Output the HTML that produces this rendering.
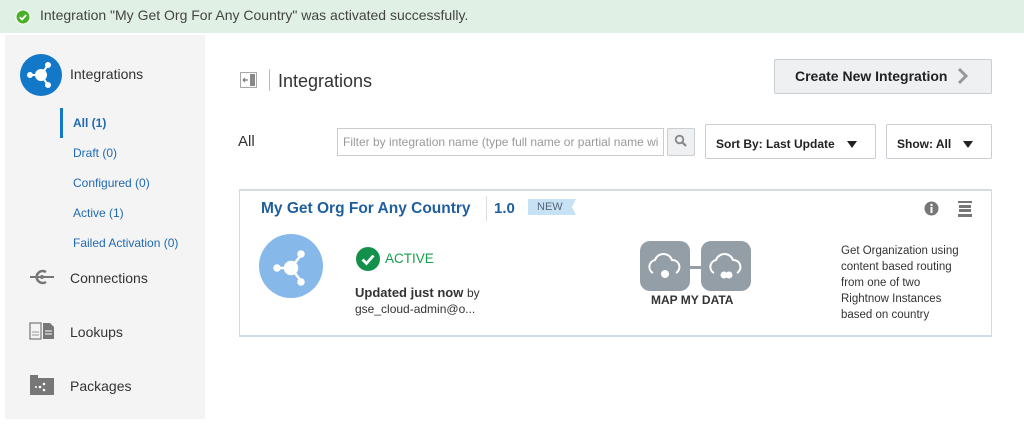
<!DOCTYPE html>
<html><head><style>
body{margin:0;width:1024px;height:429px;background:#fff;font-family:"Liberation Sans",sans-serif;position:relative;overflow:hidden;color:#333}
.a{position:absolute}
.banner{left:0;top:0;width:1024px;height:33px;background:#e1f0e4;}
.side{left:5px;top:35px;width:200px;height:384px;background:#f4f4f4}
.sub{font-size:12px;color:#1f6ab3;left:73px}
.nav{font-size:14px;color:#333;left:70px}
.btn{border:1px solid #c9ced3;background:#eef0f2;border-radius:2px;box-sizing:border-box}
.sel{border:1px solid #c9ced3;background:#fff;box-sizing:border-box;font-size:12px;font-weight:bold;color:#222;border-radius:2px}
.tri{position:absolute;width:0;height:0;border-left:5px solid transparent;border-right:5px solid transparent;border-top:7px solid #222}
</style></head><body>
<div class="a banner"></div>
<svg class="a" style="left:15px;top:9px" width="16" height="16"><circle cx="8" cy="8" r="7.5" fill="#fff"/><circle cx="8" cy="8" r="6.5" fill="#4caf2a"/><path d="M4.8 8.3l2.2 2.2 4.2-4.5" stroke="#fff" stroke-width="1.8" fill="none"/></svg>
<div class="a" style="left:40px;top:7px;font-size:14px;color:#444">Integration "My Get Org For Any Country" was activated successfully.</div>
<div class="a side"></div>
<svg class="a" style="left:20px;top:54px" width="42" height="42"><circle cx="21" cy="21" r="21" fill="#1478c9"/><g stroke="#fff" stroke-width="2" fill="#fff"><line x1="21" y1="21" x2="28" y2="11"/><line x1="21" y1="21" x2="11" y2="21"/><line x1="21" y1="21" x2="28" y2="31"/><circle cx="28" cy="11" r="2"/><circle cx="10" cy="21" r="2"/><circle cx="28" cy="31" r="2"/><circle cx="21" cy="21" r="5"/></g></svg>
<div class="a nav" style="top:66px">Integrations</div>
<div class="a" style="left:60px;top:108px;width:3px;height:30px;background:#1478c9"></div>
<div class="a sub" style="top:116px;font-weight:bold">All (1)</div>
<div class="a sub" style="top:146px">Draft (0)</div>
<div class="a sub" style="top:176px">Configured (0)</div>
<div class="a sub" style="top:206px">Active (1)</div>
<div class="a sub" style="top:236px">Failed Activation (0)</div>
<svg class="a" style="left:29px;top:269px" width="26" height="16"><line x1="1" y1="8" x2="25" y2="8" stroke="#777" stroke-width="2"/><path d="M17 3a6 6 0 1 0 0 10" stroke="#777" stroke-width="2.5" fill="none"/><circle cx="13" cy="8" r="2" fill="#777"/></svg>
<div class="a nav" style="top:270px">Connections</div>
<svg class="a" style="left:29px;top:322px" width="26" height="18"><rect x="1" y="1" width="11" height="16" fill="#f4f4f4" stroke="#777" stroke-width="1.2"/><path d="M14 1h7l4 4v12h-11z" fill="#777"/><g stroke="#fff" stroke-width="1"><line x1="16" y1="9" x2="23" y2="9"/><line x1="16" y1="12" x2="23" y2="12"/></g><g stroke="#999"><line x1="3" y1="10" x2="10" y2="10"/><line x1="3" y1="13" x2="10" y2="13"/></g></svg>
<div class="a nav" style="top:324px">Lookups</div>
<svg class="a" style="left:29px;top:374px" width="26" height="21"><path d="M1 1h8v3h16v17h-24z" fill="#777"/><g fill="#fff"><circle cx="11" cy="13" r="1.3"/><circle cx="15" cy="10" r="1.3"/><circle cx="15" cy="16" r="1.3"/><circle cx="7" cy="13" r="1"/></g></svg>
<div class="a nav" style="top:378px">Packages</div>

<svg class="a" style="left:240px;top:72px" width="17" height="16"><rect x="0.5" y="0.5" width="16" height="15" fill="#fff" stroke="#aaa"/><rect x="10" y="2" width="5" height="12" fill="#888"/><path d="M3 8h5M3 8l2-2M3 8l2 2" stroke="#777" stroke-width="1.2" fill="none"/></svg>
<div class="a" style="left:269px;top:69px;width:1px;height:22px;background:#bbb"></div>
<div class="a" style="left:278px;top:71px;font-size:18px;color:#333">Integrations</div>
<div class="a btn" style="left:774px;top:59px;width:218px;height:35px"></div>
<div class="a" style="left:795px;top:68px;font-size:14px;font-weight:bold;color:#222">Create New Integration</div>
<svg class="a" style="left:957px;top:68px" width="12" height="16"><path d="M2 1l7 7-7 7" stroke="#999" stroke-width="3" fill="none"/></svg>
<div class="a" style="left:238px;top:133px;font-size:15px;color:#333">All</div>
<div class="a" style="left:337px;top:128px;width:327px;height:28px;border:1px solid #ccc;box-sizing:border-box;background:#fff"></div>
<div class="a" style="left:343px;top:135px;font-size:12px;color:#999;white-space:nowrap;width:318px;overflow:hidden">Filter by integration name (type full name or partial name wi</div>
<div class="a btn" style="left:667px;top:128px;width:28px;height:28px"></div>
<svg class="a" style="left:674px;top:134px" width="14" height="14"><circle cx="5.5" cy="5.5" r="3.8" stroke="#888" stroke-width="1.8" fill="none"/><line x1="8.5" y1="8.5" x2="12" y2="12" stroke="#888" stroke-width="2.2"/></svg>
<div class="a sel" style="left:705px;top:124px;width:171px;height:35px"></div>
<div class="a" style="left:716px;top:137px;font-size:12px;font-weight:bold;color:#222">Sort By: Last Update</div>
<div class="tri" style="left:847px;top:141px"></div>
<div class="a sel" style="left:886px;top:124px;width:106px;height:35px"></div>
<div class="a" style="left:897px;top:137px;font-size:12px;font-weight:bold;color:#222">Show: All</div>
<div class="tri" style="left:963px;top:141px"></div>

<div class="a" style="left:239px;top:189px;width:753px;height:148px;border:1px solid #d4dce3;border-top:2px solid #d4dce3;border-bottom:2px solid #d4dce3;box-sizing:border-box"></div>
<div class="a" style="left:261px;top:200px;font-size:15.5px;font-weight:bold;color:#1f5f9e">My Get Org For Any Country</div>
<div class="a" style="left:486px;top:196px;width:1px;height:25px;background:#ddd"></div>
<div class="a" style="left:494px;top:200px;font-size:15px;font-weight:bold;color:#1f5f9e">1.0</div>
<svg class="a" style="left:528px;top:199px" width="48" height="16"><path d="M0 0h48l-4 8 4 8h-48z" fill="#c8e2f5"/></svg>
<div class="a" style="left:537px;top:201px;font-size:11px;color:#567">NEW</div>
<svg class="a" style="left:924px;top:201px" width="15" height="15"><circle cx="7.5" cy="7.5" r="7" fill="#777"/><rect x="6.5" y="6" width="2" height="6" fill="#fff"/><circle cx="7.5" cy="4" r="1.2" fill="#fff"/></svg>
<svg class="a" style="left:958px;top:201px" width="14" height="16"><g fill="#777"><rect x="0" y="0" width="14" height="2"/><rect x="1" y="4" width="12" height="3"/><rect x="1" y="8" width="12" height="3"/><rect x="0" y="13" width="14" height="3"/></g></svg>
<svg class="a" style="left:258px;top:233px" width="66" height="66"><circle cx="33" cy="33" r="32" fill="#87b8ea"/><g stroke="#fff" stroke-width="2.5" fill="#fff"><line x1="33" y1="35" x2="43" y2="22"/><line x1="33" y1="35" x2="20" y2="35"/><line x1="33" y1="35" x2="43" y2="48"/><circle cx="43" cy="21" r="2.5"/><circle cx="19" cy="35" r="2.5"/><circle cx="43" cy="49" r="2.5"/><circle cx="33" cy="35" r="6"/></g></svg>
<svg class="a" style="left:356px;top:247px" width="24" height="24"><circle cx="12" cy="12" r="12" fill="#13904a"/><path d="M6.5 12.5l4 4 7-8" stroke="#fff" stroke-width="2.8" fill="none"/></svg>
<div class="a" style="left:385px;top:251px;font-size:13.5px;color:#13a04a">ACTIVE</div>
<div class="a" style="left:355px;top:285px;font-size:13px;color:#333"><b>Updated just now</b> <span style="font-size:12px">by</span></div>
<div class="a" style="left:355px;top:302px;font-size:12px;color:#333">gse_cloud-admin@o...</div>
<div class="a" style="left:680px;top:266px;width:30px;height:3px;background:#949ea7"></div>
<svg class="a" style="left:640px;top:241px" width="112" height="50"><rect x="0" y="0" width="50" height="50" rx="10" fill="#949ea7"/><rect x="61" y="0" width="50" height="50" rx="10" fill="#949ea7"/><g stroke="#fff" stroke-width="2" fill="none"><path d="M13 32a7 7 0 0 1 2-13a9 9 0 0 1 17 0a7 7 0 0 1 4 13"/><path d="M74 32a7 7 0 0 1 2-13a9 9 0 0 1 17 0a7 7 0 0 1 4 13"/></g><circle cx="25" cy="33" r="4" fill="#fff"/><circle cx="84" cy="34" r="3.5" fill="#fff"/><circle cx="89" cy="34" r="3.5" fill="#fff"/></svg>
<div class="a" style="left:651px;top:293px;font-size:12px;font-weight:bold;color:#333">MAP MY DATA</div>
<div class="a" style="left:841px;top:243px;font-size:11.5px;color:#333;line-height:16px;width:128px">Get Organization using content based routing from one of two Rightnow Instances based on country</div>
</body></html>
